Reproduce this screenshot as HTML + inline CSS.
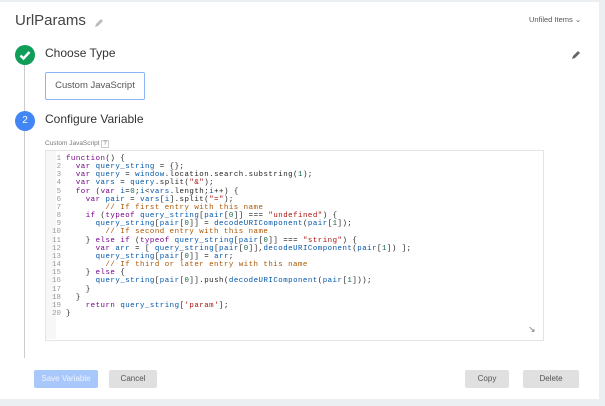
<!DOCTYPE html><html><head><style>
body{margin:0;width:605px;height:406px;background:#eceff1;font-family:"Liberation Sans",sans-serif;position:relative;overflow:hidden}
.card{position:absolute;left:0;top:2px;width:599px;height:397px;background:#fff}
.a{position:absolute}
pre{margin:0;font-family:"Liberation Mono",monospace;font-size:7.4px;line-height:8.15px;color:#222}
.k{color:#708}.v{color:#05a}.s{color:#a11}.c{color:#a50}.n{color:#164}
.btn{position:absolute;top:370px;height:18px;font-size:8px;color:#555;text-align:center;line-height:18px;background:#e0e0e0;border-radius:2px}
</style></head><body><div class="card"></div>
<div class="a" style="left:15px;top:12px;font-size:15px;color:#444">UrlParams</div>
<svg class="a" style="left:94px;top:19px" width="9" height="9"><path d="M1 8l1-3 5-5 2 2-5 5z" fill="#bbb"/></svg>
<div class="a" style="left:529px;top:15px;font-size:7.5px;color:#555">Unfiled Items ⌄</div>
<svg class="a" style="left:571px;top:50px" width="10" height="10"><path d="M1 9l1-3 5-5 2 2-5 5z" fill="#666"/></svg>
<div class="a" style="left:24px;top:63px;width:1px;height:295px;background:#ccc"></div>
<div class="a" style="left:15px;top:45px;width:20px;height:20px;border-radius:50%;background:#0f9d58"></div>
<svg class="a" style="left:15px;top:45px" width="20" height="20"><path d="M5.5 10.5l3 3 6-6.5" stroke="#fff" stroke-width="2.5" fill="none"/></svg>
<div class="a" style="left:45px;top:46px;font-size:12px;color:#333">Choose Type</div>
<div class="a" style="left:45px;top:72px;width:98px;height:26px;border:1px solid #8ab4f8;border-radius:2px;font-size:9.5px;color:#555;line-height:26px;text-align:center">Custom JavaScript</div>
<div class="a" style="left:15px;top:111px;width:20px;height:20px;border-radius:50%;background:#4285f4;color:#fff;font-size:10px;line-height:20px;text-align:center">2</div>
<div class="a" style="left:45px;top:112px;font-size:12px;color:#333">Configure Variable</div>
<div class="a" style="left:45px;top:140px;font-size:6.5px;color:#777">Custom JavaScript <span style="border:1px solid #ccc;padding:0 1px;font-size:6px">?</span></div>
<div class="a" style="left:45px;top:150px;width:497px;height:189px;border:1px solid #e4e4e4"></div>
<div class="a" style="left:46px;top:151px;width:10px;height:188px;background:#f7f7f7"></div>
<pre class="a" style="left:46px;top:155px;color:#999;text-align:right;width:15px">1
2
3
4
5
6
7
8
9
10
11
12
13
14
15
16
17
18
19
20</pre>
<pre class="a" style="left:66px;top:155px;letter-spacing:0.5px"><span class="k">function</span>() {
  <span class="k">var</span> <span class="v">query_string</span> = {};
  <span class="k">var</span> <span class="v">query</span> = <span class="v">window</span>.location.search.substring(<span class="n">1</span>);
  <span class="k">var</span> <span class="v">vars</span> = <span class="v">query</span>.split(<span class="s">"&amp;"</span>);
  <span class="k">for</span> (<span class="k">var</span> <span class="v">i</span>=<span class="n">0</span>;<span class="v">i</span>&lt;<span class="v">vars</span>.length;<span class="v">i</span>++) {
    <span class="k">var</span> <span class="v">pair</span> = <span class="v">vars</span>[<span class="v">i</span>].split(<span class="s">"="</span>);
        <span class="c">// If first entry with this name</span>
    <span class="k">if</span> (<span class="k">typeof</span> <span class="v">query_string</span>[<span class="v">pair</span>[<span class="n">0</span>]] === <span class="s">"undefined"</span>) {
      <span class="v">query_string</span>[<span class="v">pair</span>[<span class="n">0</span>]] = <span class="v">decodeURIComponent</span>(<span class="v">pair</span>[<span class="n">1</span>]);
        <span class="c">// If second entry with this name</span>
    } <span class="k">else</span> <span class="k">if</span> (<span class="k">typeof</span> <span class="v">query_string</span>[<span class="v">pair</span>[<span class="n">0</span>]] === <span class="s">"string"</span>) {
      <span class="k">var</span> <span class="v">arr</span> = [ <span class="v">query_string</span>[<span class="v">pair</span>[<span class="n">0</span>]],<span class="v">decodeURIComponent</span>(<span class="v">pair</span>[<span class="n">1</span>]) ];
      <span class="v">query_string</span>[<span class="v">pair</span>[<span class="n">0</span>]] = <span class="v">arr</span>;
        <span class="c">// If third or later entry with this name</span>
    } <span class="k">else</span> {
      <span class="v">query_string</span>[<span class="v">pair</span>[<span class="n">0</span>]].push(<span class="v">decodeURIComponent</span>(<span class="v">pair</span>[<span class="n">1</span>]));
    }
  }
    <span class="k">return</span> <span class="v">query_string</span>[<span class="s">'param'</span>];
}</pre>
<div class="a" style="left:528px;top:324px;font-size:9px;color:#777">↘</div>
<div class="btn" style="left:34px;width:64px;background:#a8c7fa;color:#eef4ff">Save Variable</div>
<div class="btn" style="left:109px;width:48px">Cancel</div>
<div class="btn" style="left:465px;width:44px">Copy</div>
<div class="btn" style="left:523px;width:56px">Delete</div>
</body></html>
